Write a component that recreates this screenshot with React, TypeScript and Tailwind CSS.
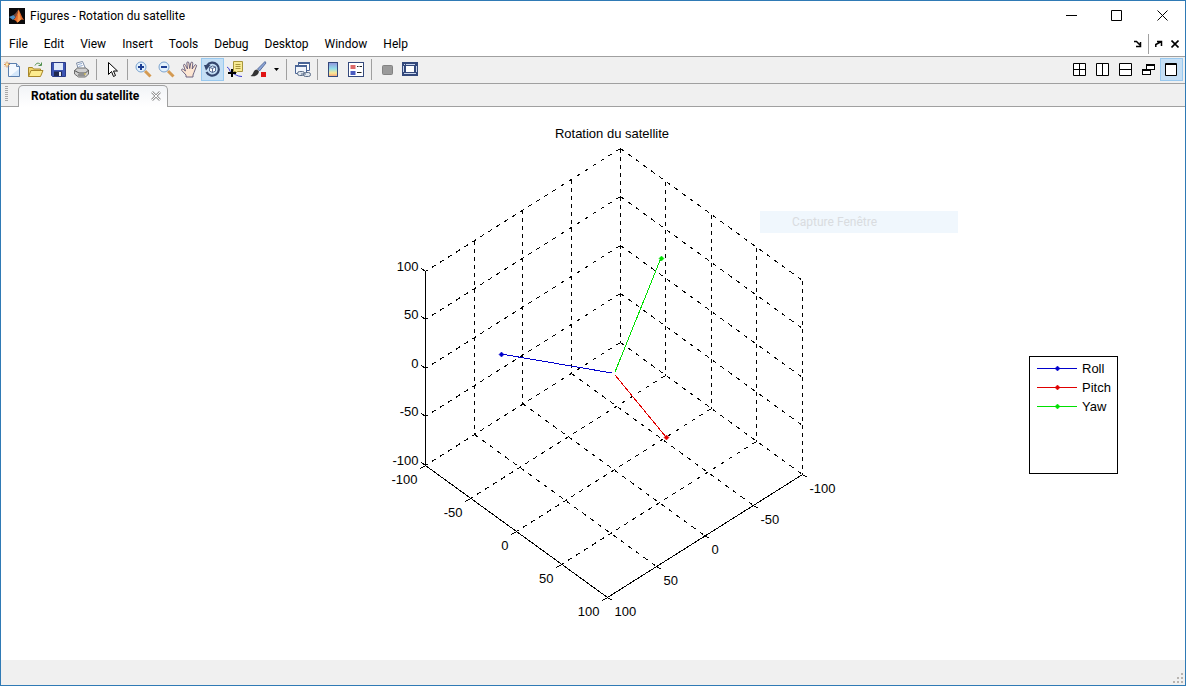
import React, { useState } from 'react';
import clsx from 'clsx';

type Point = [number, number];

const menus = ['File', 'Edit', 'View', 'Insert', 'Tools', 'Debug', 'Desktop', 'Window', 'Help'];

const series = [
  { name: 'Roll', color: '#0000cc', from: [269, 266] as Point, to: [158, 247] as Point },
  { name: 'Pitch', color: '#e00000', from: [272, 268] as Point, to: [323, 330] as Point },
  { name: 'Yaw', color: '#00e000', from: [272, 265] as Point, to: [318, 151] as Point },
];

// corners of the axes box floor
const left: Point = [82, 359];
const back: Point = [277, 236];
const right: Point = [459, 368];
const front: Point = [264, 491];
const boxHeight = 194;

const steps = [0, 0.25, 0.5, 0.75, 1];
const tickValues = ['-100', '-50', '0', '50', '100'];

const lerp = (a: Point, b: Point, t: number): Point => [
  Math.round(a[0] + (b[0] - a[0]) * t - 0.1) + 0.5,
  Math.round(a[1] + (b[1] - a[1]) * t - 0.1) - 0.5,
];

const raise = (p: Point, t: number): Point => [p[0], p[1] - Math.round(boxHeight * t)];

function Segment({ a, b, dash, color = '#000' }: { a: Point; b: Point; dash?: string; color?: string }) {
  return (
    <line
      x1={a[0]}
      y1={a[1]}
      x2={b[0]}
      y2={b[1]}
      stroke={color}
      strokeDasharray={dash}
      shapeRendering="crispEdges"
    />
  );
}

function Marker({ x, y, color }: { x: number; y: number; color: string }) {
  return <path d={`M${x - 2.5} ${y}l2.5-2.5 2.5 2.5-2.5 2.5z`} fill={color} stroke={color} strokeWidth="0.5" />;
}

function AxesPlot() {
  const slanted = '4.5 5';
  const upright = '4 4';

  return (
    <svg viewBox="0 0 500 552" width="500" height="552" className="font-['Liberation_Sans',Arial,sans-serif] text-[13px]">
      <text x="269" y="31" textAnchor="middle">Rotation du satellite</text>

      {steps.map((t) => (
        <g key={t}>
          {/* floor */}
          {t < 1 && <Segment a={lerp(back, left, t)} b={lerp(right, front, t)} dash={slanted} />}
          {t < 1 && <Segment a={lerp(back, right, t)} b={lerp(left, front, t)} dash={slanted} />}
          {/* walls, vertical lines */}
          {t < 1 && <Segment a={raise(lerp(back, left, t), 1)} b={lerp(back, left, t)} dash={upright} />}
          {t > 0 && <Segment a={raise(lerp(back, right, t), 1)} b={lerp(back, right, t)} dash={upright} />}
          {/* walls, level lines */}
          {t > 0 && <Segment a={raise(lerp(back, left, 0), t)} b={raise(lerp(back, left, 1), t)} dash={slanted} />}
          {t > 0 && <Segment a={raise(lerp(back, right, 0), t)} b={raise(lerp(back, right, 1), t)} dash={slanted} />}
        </g>
      ))}

      <Segment a={lerp(left, left, 0)} b={raise(lerp(left, left, 0), 1)} />
      <Segment a={lerp(left, left, 0)} b={lerp(front, front, 0)} />
      <Segment a={lerp(front, front, 0)} b={lerp(right, right, 0)} />

      {steps.map((t, i) => {
        const z = raise(lerp(left, left, 0), t);
        const x = lerp(left, front, t);
        const y = lerp(right, front, t);
        return (
          <g key={t}>
            <Segment a={z} b={[z[0] - 4, z[1] - 3]} />
            <Segment a={x} b={[x[0] - 5, x[1] + 3]} />
            <Segment a={y} b={[y[0] + 5, y[1] + 3]} />
            <text x={z[0] - 7} y={z[1] - 0.5} textAnchor="end">{tickValues[i]}</text>
            <text x={x[0] - 8} y={x[1] + 18.5} textAnchor="end">{tickValues[i]}</text>
            <text x={y[0] + 7} y={y[1] + 18.5}>{tickValues[i]}</text>
          </g>
        );
      })}

      {series.map((s) => (
        <g key={s.name}>
          <Segment a={s.from} b={s.to} color={s.color} />
          <Marker x={s.to[0] + 0.5} y={s.to[1] + 0.5} color={s.color} />
        </g>
      ))}
    </svg>
  );
}

function Legend() {
  return (
    <ul className="h-[118px] w-[89px] border border-black bg-white pl-[7px] pt-0.5 font-['Liberation_Sans',Arial,sans-serif] text-[13px] leading-[19px]">
      {series.map((s) => (
        <li key={s.name} className="flex items-center gap-1">
          <svg width="41" height="7" viewBox="0 0 41 7">
            <Segment a={[0, 3.5]} b={[40, 3.5]} color={s.color} />
            <Marker x={20.5} y={3.5} color={s.color} />
          </svg>
          {s.name}
        </li>
      ))}
    </ul>
  );
}

const icons: Record<string, React.ReactNode> = {
  new: (
    <>
      <path d="M4.5 2.5h8l3 3v10h-11z" fill="#f4f9ff" stroke="#5b7fae" />
      <path d="M12.5 2.5v3h3" fill="#cfe0f5" stroke="#5b7fae" />
      <path d="M6 15h9V8z" fill="#d3e6fa" />
      <path d="M3 .5v6M0 3.5h6M1 1.5l4 4M5 1.5l-4 4" stroke="#d88a4a" />
      <circle cx="3" cy="3.5" r="1.2" fill="#fff2b0" />
    </>
  ),
  open: (
    <>
      <path d="M1.5 15.5v-9h4l1 1.5h7v3" fill="#f0d56a" stroke="#a8872a" />
      <path d="M1.5 15.5l2.5-6h12l-2.5 6z" fill="#fdec8e" stroke="#a8872a" />
      <path d="M8 4.5c1.5-3 4-3 6-.5M14.5 1.5v3h-3" fill="none" stroke="#4f8f4c" />
    </>
  ),
  save: (
    <>
      <path d="M1.5 1.5h14v14h-13l-1-1z" fill="#3d55b4" stroke="#2a3a86" />
      <path d="M4 2h9v7H4z" fill="#dfe9fa" />
      <path d="M4 10.5h8V15H4z" fill="#20284e" />
      <path d="M9 11h2v4H9z" fill="#e8ecf6" />
    </>
  ),
  print: (
    <>
      <path d="M5.5 8.5l-2-6.5 6-1.5 3 7z" fill="#fff" stroke="#7d8ca5" />
      <path d="M5 3.5l4-1M5.7 5.5l4-1" stroke="#8aa5cc" />
      <path d="M1.5 9.5l3-2.5h8l3 2v4l-3 3h-7l-4-3z" fill="#cfcfcf" stroke="#6d6d6d" />
      <path d="M1.5 9.5l4.5 2.5h6.5l3-3M5 14h7" fill="none" stroke="#555" />
      <path d="M11 13h2" stroke="#e3c53b" />
    </>
  ),
  pointer: <path d="M4.5 1.5v12l3-3 2 5 2-1-2-4.5h4z" fill="#fff" stroke="#000" />,
  zoomIn: (
    <>
      <path d="M10 10l5.5 5.5" stroke="#d49a52" strokeWidth="3" />
      <circle cx="6" cy="6" r="5" fill="#e3f1fc" stroke="#7ba3cf" />
      <path d="M3 6h6M6 3v6" stroke="#1c3f94" strokeWidth="2" />
    </>
  ),
  zoomOut: (
    <>
      <path d="M10 10l5.5 5.5" stroke="#d49a52" strokeWidth="3" />
      <circle cx="6" cy="6" r="5" fill="#e3f1fc" stroke="#7ba3cf" />
      <path d="M3 6h6" stroke="#1c3f94" strokeWidth="2" />
    </>
  ),
  pan: (
    <path
      d="M5 16v-2L.8 9.5c-.8-1.5.8-2 1.7-1L4.5 10 2.5 4.5c0-1.500 1.600-1.500 2-.2L6.500 8 5.800 2c.2-1.500 1.900-1.500 2.100 0l.8 5.500L9.800 2c.4-1.400 2-1.200 2 .2L11.200 8l2.500-3.800c.8-1 2.200-.4 1.800.8L13 11.500l-1 2.500v2z"
      fill="#fde6d2"
      stroke="#5d5576"
      strokeWidth="0.9"
    />
  ),
  rotate: (
    <>
      <path d="M3 4.5A6.5 6.5 0 1 1 2.5 11" fill="none" stroke="#34466e" strokeWidth="2.2" />
      <path d="M0 4h6.5L2 9.5z" fill="#34466e" />
      <path d="M5.5 6.5l3-1.5 3 1v4l-3 1.5-3-1.5zM5.5 6.5l3 1 3-1.5M8.5 7.5v4" fill="#fff" stroke="#4a5c86" strokeWidth="0.9" />
    </>
  ),
  dataCursor: (
    <>
      <path d="M6.5.5h9v10h-5l-2 2v-2h-2z" fill="#f8eb93" stroke="#a8963c" />
      <path d="M8.5 3.5h5M8.5 5.5h5M8.5 7.5h5" stroke="#a8963c" />
      <path d="M0 6c3 1 2 5 5 6s5 3.5 10 3.5" fill="none" stroke="#3b3bd0" />
      <path d="M5 8v8M1 12h8" stroke="#000" strokeWidth="2" />
    </>
  ),
  brush: (
    <>
      <path d="M15 .5L7.5 8l2 2L16 2z" fill="#8ba5d6" stroke="#45598c" strokeWidth="0.8" />
      <path d="M7 8.5c-4 0-3 5-6.5 6.5 4 1 8-.5 8.5-4.5z" fill="#333" />
      <path d="M11 11h5v5h-5z" fill="#e01414" />
    </>
  ),
  link: (
    <>
      <path d="M4.5 1.5h11v8h-11z" fill="#fff" stroke="#4a6596" />
      <path d="M4 1h12v2H4z" fill="#4a6596" />
      <path d="M1.5 4.5h11v8h-11z" fill="#f2f6fc" stroke="#4a6596" />
      <path d="M1 4h12v2H1z" fill="#4a6596" />
      <rect x="3.5" y="10.5" width="7" height="4" rx="2" fill="#dfe6ee" stroke="#5a6d88" />
      <rect x="9.5" y="11.5" width="7" height="4" rx="2" fill="#dfe6ee" stroke="#5a6d88" />
      <path d="M7 13h5" stroke="#5a6d88" />
    </>
  ),
  colorbar: (
    <>
      <defs>
        <linearGradient id="jet" x1="0" y1="0" x2="0" y2="1">
          <stop offset="0" stopColor="#8f92dc" />
          <stop offset="0.45" stopColor="#93e0ea" />
          <stop offset="0.75" stopColor="#fbe894" />
          <stop offset="1" stopColor="#f4a07a" />
        </linearGradient>
      </defs>
      <rect x="3.5" y="1.5" width="9" height="14" fill="url(#jet)" stroke="#34497c" />
    </>
  ),
  legend: (
    <>
      <rect x=".5" y="1.5" width="15" height="14" fill="#fff" stroke="#34497c" />
      <path d="M2.5 4h5v4h-5z" fill="#dc6a6a" />
      <path d="M2.5 10h5v4h-5z" fill="#4a5cc0" />
      <path d="M9 5.5h1.5M11.5 5.5H14M9 11.5h4.5" stroke="#222" />
    </>
  ),
  hideTools: <rect x="3.5" y="4.5" width="10" height="9" rx="1" fill="#9a9a9a" stroke="#838383" />,
  showTools: (
    <>
      <rect x=".5" y="1.5" width="15" height="13" fill="#34497c" stroke="#34497c" />
      <path d="M4 5h8v6H4z" fill="#fff" />
      <path d="M2 3.5h1M4 3.5h9M1.5 5v6M14.5 5v6M2 12.5h12" stroke="#c9d6ee" />
    </>
  ),
  tile: <path d="M2.5 2.5h12v12h-12zM8.5 2.5v12M2.5 8.5h12" fill="#fff" stroke="#000" />,
  columns: <path d="M2.5 2.5h12v12h-12zM8.5 2.5v12" fill="#fff" stroke="#000" />,
  rows: <path d="M2.5 2.5h12v12h-12zM2.5 8.5h12" fill="#fff" stroke="#000" />,
  float: (
    <>
      <path d="M6 3h9v6H6z" fill="#000" />
      <path d="M7 5h7v3H7z" fill="#fff" />
      <path d="M2 8h9v6H2z" fill="#000" />
      <path d="M3 10h7v3H3z" fill="#fff" />
    </>
  ),
  maximize: <path d="M2.5 2.5h11v12h-11zM2 3.5h12" fill="#fff" stroke="#000" />,
};

function Icon({ name }: { name: string }) {
  return (
    <svg width="17" height="17" viewBox="0 0 17 17" fill="none">
      {icons[name]}
    </svg>
  );
}

interface ToolButtonProps {
  name: string;
  label: string;
  active?: boolean;
  onClick?: () => void;
}

function ToolButton({ name, label, active, onClick }: ToolButtonProps) {
  return (
    <button
      aria-label={label}
      onClick={onClick}
      className={clsx(
        'flex h-[23px] w-[23px] items-center justify-center border',
        active ? 'border-[#99c9ef] bg-[#c5dff5]' : 'border-transparent hover:bg-[#e0eef9]'
      )}
    >
      <Icon name={name} />
    </button>
  );
}

const Divider = () => <span className="ml-[3px] mr-1 h-[21px] w-px bg-[#a0a0a0]" />;

function TitleBar() {
  return (
    <header className="flex h-[29px] items-center pl-2">
      <svg width="16" height="16" viewBox="0 0 16 16">
        <path d="M0 0h16v16H0z" fill="#0a0a0c" />
        <path d="M0 9l4.5-2 2.5 2-3 3z" fill="#4d8fc4" />
        <path d="M4.5 7C7 6 8 2.5 9.5 1.5L7 10z" fill="#7a4a3a" />
        <path d="M9.5 1.5C11 3 12 8 15 12c-2-1-3-.5-4 .5s-2 2-3 2c-1-2-2-2.500-4-2.500 3-1 4-6 5.500-10.500z" fill="#e2672a" />
        <path d="M9.5 1.5C9 6 9 10 8 14.5c2 0 3-3 4-3z" fill="#f59b4c" />
      </svg>
      <h1 className="ml-[5px]">Figures - Rotation du satellite</h1>
      <div className="ml-auto flex">
        <button aria-label="Minimize" className="flex w-[45px] justify-center">
          <svg width="11" height="11"><path d="M0 5.5h11" stroke="#000" /></svg>
        </button>
        <button aria-label="Maximize" className="flex w-[45px] justify-center">
          <svg width="11" height="11"><path d="M.5.5h10v10H.5z" fill="none" stroke="#000" /></svg>
        </button>
        <button aria-label="Close" className="flex w-[46px] justify-center">
          <svg width="11" height="11"><path d="M.5.5l10 10M10.5.5l-10 10" stroke="#000" /></svg>
        </button>
      </div>
    </header>
  );
}

function MenuBar() {
  return (
    <nav className="flex h-[26px] items-center pl-2 pt-0.5">
      <div className="flex gap-4">
        {menus.map((menu) => (
          <button key={menu}>{menu}</button>
        ))}
      </div>
      <div className="ml-auto flex items-center pr-1.5">
        <button aria-label="Dock" className="px-1.5">
          <svg width="8" height="8"><path d="M0 1.5h2.5L6 5M6.5 2v4.5H2" fill="none" stroke="#000" strokeWidth="1.5" /></svg>
        </button>
        <span className="h-5 w-px bg-[#a0a0a0]" />
        <button aria-label="Undock" className="pl-1.5">
          <svg width="8" height="8"><path d="M.8 7V4.5L5.5 2M2 1.5h4.5V6" fill="none" stroke="#000" strokeWidth="1.5" /></svg>
        </button>
        <button aria-label="Close figure" className="pl-2">
          <svg width="8" height="8"><path d="M.5.5l7 7M7.5.5l-7 7" stroke="#000" strokeWidth="1.6" /></svg>
        </button>
      </div>
    </nav>
  );
}

function Toolbar() {
  const [layout, setLayout] = useState('maximize');
  const layouts = [
    { name: 'tile', label: 'Tile' },
    { name: 'columns', label: 'Left/Right Tile' },
    { name: 'rows', label: 'Top/Bottom Tile' },
    { name: 'float', label: 'Float' },
    { name: 'maximize', label: 'Maximize layout' },
  ];

  return (
    <div className="flex h-7 items-center border-y border-[#a0a0a0] bg-[#f0f0f0] pb-0.5">
      <ToolButton name="new" label="New Figure" />
      <ToolButton name="open" label="Open File" />
      <ToolButton name="save" label="Save Figure" />
      <ToolButton name="print" label="Print Figure" />
      <Divider />
      <ToolButton name="pointer" label="Edit Plot" />
      <Divider />
      <ToolButton name="zoomIn" label="Zoom In" />
      <ToolButton name="zoomOut" label="Zoom Out" />
      <ToolButton name="pan" label="Pan" />
      <ToolButton name="rotate" label="Rotate 3D" active />
      <ToolButton name="dataCursor" label="Data Cursor" />
      <ToolButton name="brush" label="Brush" />
      <button aria-label="Brush options" className="flex w-[13px] justify-center">
        <svg width="5" height="3"><path d="M0 0h5L2.5 3z" /></svg>
      </button>
      <Divider />
      <ToolButton name="link" label="Link Plot" />
      <Divider />
      <ToolButton name="colorbar" label="Insert Colorbar" />
      <ToolButton name="legend" label="Insert Legend" />
      <Divider />
      <ToolButton name="hideTools" label="Hide Plot Tools" />
      <ToolButton name="showTools" label="Show Plot Tools" />
      <div className="ml-auto flex pr-0.5">
        {layouts.map((l) => (
          <ToolButton key={l.name} {...l} active={layout === l.name} onClick={() => setLayout(l.name)} />
        ))}
      </div>
    </div>
  );
}

function TabStrip() {
  return (
    <div className="flex h-[23px] items-end border-b border-[#a0a0a0] bg-[#f0f0f0] pl-1">
      <svg width="3" height="16" className="mb-1">
        <path d="M1.5 0v16" stroke="#a8a8a8" strokeWidth="3" strokeDasharray="1 1" />
      </svg>
      <div className="-mb-px ml-2.5 flex h-[22px] items-center rounded-t-[5px] border border-b-0 border-[#a0a0a0] bg-linear-to-b from-[#f2f4f7] to-white pb-0.5 pl-3 pr-1.5">
        <span className="font-bold">Rotation du satellite</span>
        <button aria-label="Close tab" className="ml-3">
          <svg width="10" height="10">
            <path d="M1 1l8 8M9 1L1 9" stroke="#9a9a9a" strokeWidth="2.5" />
            <path d="M1 1l8 8M9 1L1 9" stroke="#fff" />
          </svg>
        </button>
      </div>
    </div>
  );
}

export default function App() {
  return (
    <div className="flex min-h-screen flex-col border border-[#2f7ab5] bg-white font-[Roboto,'Segoe_UI',sans-serif] text-[12px] leading-4 text-black">
      <TitleBar />
      <MenuBar />
      <Toolbar />
      <TabStrip />
      <main className="relative grid flex-1 grid-cols-[1fr_500px_1fr] items-center">
        <div className="col-start-2 self-start">
          <AxesPlot />
        </div>
        <div className="mr-[67px] mt-[62px] justify-self-end">
          <Legend />
        </div>
        <div className="absolute left-1/2 top-[104px] ml-[167px] h-[22px] w-[198px] bg-[#f0f7fd] pl-8 leading-[22px] text-[#d9dce0]">
          Capture Fenêtre
        </div>
      </main>
      <footer className="flex h-[25px] items-end justify-end bg-[#f0f0f0] p-0.5">
        <svg width="10" height="10" fill="#b8b4b0">
          <path d="M8 0h2v2H8zM4 4h2v2H4zM8 4h2v2H8zM0 8h2v2H0zM4 8h2v2H4zM8 8h2v2H8z" />
        </svg>
      </footer>
    </div>
  );
}
